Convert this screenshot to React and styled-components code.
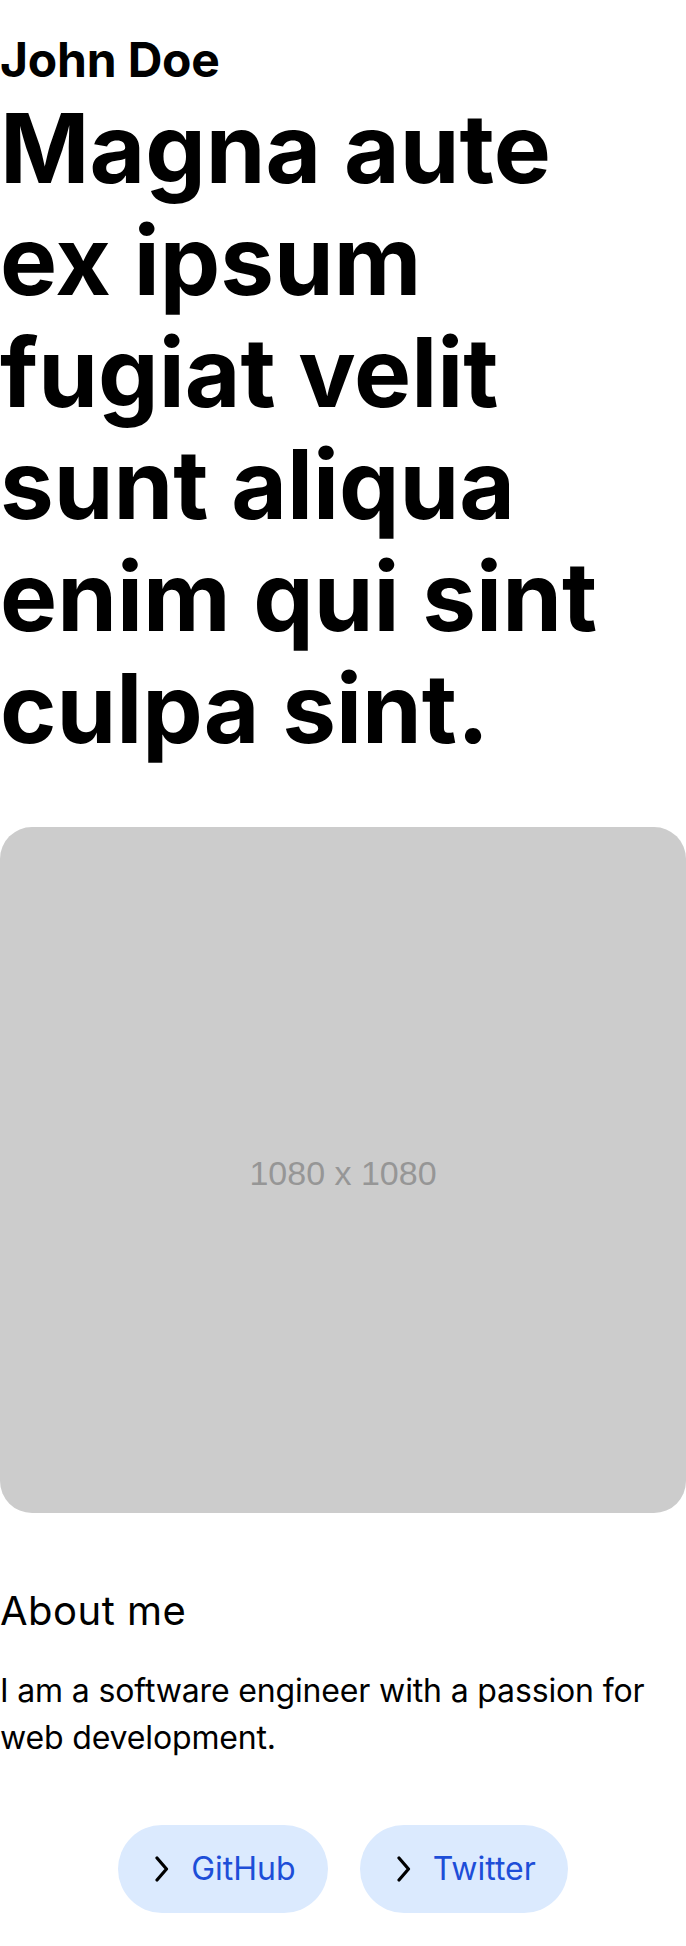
import React from 'react';
import styled, { createGlobalStyle } from 'styled-components';

const GlobalStyle = createGlobalStyle`
  html, body {
    margin: 0;
    padding: 0;
    background: #ffffff;
  }
  body {
    font-family: Inter, 'Noto Sans', sans-serif;
    color: #000000;
  }
  * {
    box-sizing: border-box;
  }
`;

const ChevronIcon = () => (
  <svg width="18" height="26" viewBox="0 0 18 26" fill="none" aria-hidden="true">
    <polyline
      points="5,2 14.5,13 5,24"
      stroke="#000"
      strokeWidth="3.2"
      strokeLinecap="round"
      strokeLinejoin="round"
    />
  </svg>
);

const links = [
  { label: 'GitHub', href: '#' },
  { label: 'Twitter', href: '#' },
];

const App = () => {
  return (
    <>
      <GlobalStyle />
      <StPage>
        <StHeader>
          <StName>John Doe</StName>
          <StHeadline>
            Magna aute ex ipsum fugiat velit sunt aliqua enim qui sint culpa
            sint.
          </StHeadline>
        </StHeader>
        <StPicture>
          <StPictureLabel>1080 x 1080</StPictureLabel>
        </StPicture>
        <StAbout>
          <StAboutTitle>About me</StAboutTitle>
          <StAboutText>
            I am a software engineer with a passion for web development.
          </StAboutText>
        </StAbout>
        <StLinks>
          {links.map(({ label, href }) => (
            <StLink key={label} href={href}>
              <ChevronIcon />
              <span>{label}</span>
            </StLink>
          ))}
        </StLinks>
      </StPage>
    </>
  );
};

const StPage = styled.main`
  width: 686px;
  padding: 28px 0 34px;
  display: flex;
  flex-direction: column;
`;

const StHeader = styled.header`
  display: flex;
  flex-direction: column;
`;

const StName = styled.h3`
  margin: 0;
  font-size: 48px;
  line-height: 64px;
  font-weight: 700;
  letter-spacing: -0.2px;
`;

const StHeadline = styled.h1`
  margin: 0;
  max-width: 660px;
  font-size: 96px;
  line-height: 112px;
  font-weight: 700;
`;

const StPicture = styled.div`
  margin-top: 63px;
  width: 100%;
  aspect-ratio: 1 / 1;
  padding-top: 7px;
  background: #cccccc;
  border-radius: 32px;
  display: flex;
  align-items: center;
  justify-content: center;
`;

const StPictureLabel = styled.span`
  font-family: 'Liberation Sans', Arial, sans-serif;
  font-size: 34px;
  color: #969696;
`;

const StAbout = styled.section`
  margin-top: 70px;
  display: flex;
  flex-direction: column;
  gap: 28px;
`;

const StAboutTitle = styled.h2`
  margin: 0;
  font-size: 40px;
  line-height: 56px;
  font-weight: 400;
  letter-spacing: 0.5px;
`;

const StAboutText = styled.p`
  margin: 0;
  font-size: 32px;
  line-height: 47px;
  font-weight: 400;
  letter-spacing: -0.15px;
`;

const StLinks = styled.nav`
  margin-top: 64px;
  display: flex;
  justify-content: center;
  gap: 32px;
`;

const StLink = styled.a`
  display: flex;
  align-items: center;
  gap: 21px;
  height: 88px;
  padding: 0 32px 0 34px;
  border-radius: 9999px;
  background: #dbeafe;
  color: #1d4ed8;
  font-size: 32px;
  line-height: 48px;
  text-decoration: none;
`;

export default App;
